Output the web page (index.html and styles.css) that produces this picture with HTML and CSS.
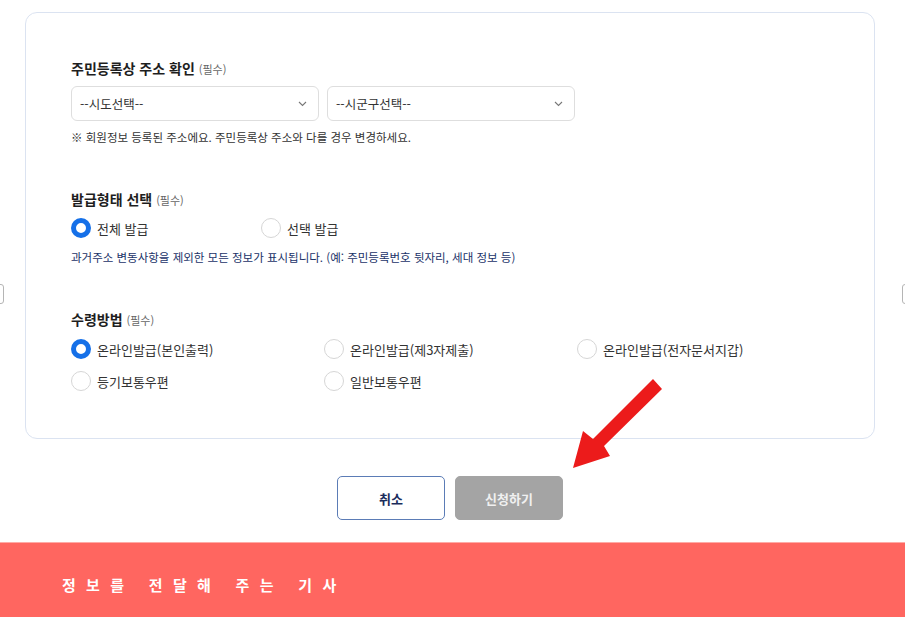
FILE: index.html
```html
<!DOCTYPE html>
<html lang="ko">
  <head>
    <meta charset="UTF-8" />
    <meta name="viewport" content="width=device-width, initial-scale=1.0" />
    <title>증명서 신청</title>
    <link rel="stylesheet" href="styles.css">
  </head>
  <body>
    <div class="page">
      <!-- 신청 폼 -->
      <div class="form-card">
        <section class="form-group">
          <h3 class="group-title">주민등록상 주소 확인 <span class="req">(필수)</span></h3>
          <div class="select-row">
            <div class="select-box">
              <span>--시도선택--</span>
              <svg class="chev" width="9" height="6" viewBox="0 0 9 6"><path d="M1 1l3.5 3.5L8 1" fill="none" stroke="#777" stroke-width="1.1"/></svg>
            </div>
            <div class="select-box">
              <span>--시군구선택--</span>
              <svg class="chev" width="9" height="6" viewBox="0 0 9 6"><path d="M1 1l3.5 3.5L8 1" fill="none" stroke="#777" stroke-width="1.1"/></svg>
            </div>
          </div>
          <p class="note">※ 회원정보 등록된 주소에요. 주민등록상 주소와 다를 경우 변경하세요.</p>
        </section>

        <section class="form-group">
          <h3 class="group-title">발급형태 선택 <span class="req">(필수)</span></h3>
          <div class="radio-row">
            <label class="radio"><span class="dot checked"></span>전체 발급</label>
            <label class="radio"><span class="dot"></span>선택 발급</label>
          </div>
          <p class="note blue">과거주소 변동사항을 제외한 모든 정보가 표시됩니다. (예: 주민등록번호 뒷자리, 세대 정보 등)</p>
        </section>

        <section class="form-group">
          <h3 class="group-title">수령방법 <span class="req">(필수)</span></h3>
          <div class="radio-grid">
            <label class="radio"><span class="dot checked"></span>온라인발급(본인출력)</label>
            <label class="radio"><span class="dot"></span>온라인발급(제3자제출)</label>
            <label class="radio"><span class="dot"></span>온라인발급(전자문서지갑)</label>
            <label class="radio"><span class="dot"></span>등기보통우편</label>
            <label class="radio"><span class="dot"></span>일반보통우편</label>
          </div>
        </section>
      </div>

      <div class="btn-row">
        <button class="btn btn-cancel">취소</button>
        <button class="btn btn-submit">신청하기</button>
      </div>

      <!-- 강조 화살표 -->
      <svg class="arrow" width="100" height="100" viewBox="0 0 100 100">
        <polygon points="87,3 96,13 38,70 44,80 7,92 17,55 27,63" fill="#ec1b1b"/>
      </svg>

      <span class="edge edge-left"></span>
      <span class="edge edge-right"></span>
    </div>

    <div class="banner">
      <span class="banner-text">정보를 전달해 주는 기사</span>
    </div>
  </body>
</html>
```

FILE: styles.css
```css
body {
  margin: 0;
  padding: 0;
  overflow: hidden;
  font-family: "Noto Sans CJK KR", "Noto Sans", sans-serif;
  color: #222;
  background: #fff;
}

.page {
  position: relative;
  padding-top: 12px;
}

.form-card {
  margin-left: 25px;
  width: 850px;
  box-sizing: border-box;
  border: 1px solid #dbe3f1;
  border-radius: 12px;
  padding: 44px 45px 47px;
}

.form-group + .form-group {
  margin-top: 42px;
}

.group-title {
  margin: 0;
  font-size: 14px;
  line-height: 22px;
  font-weight: 700;
  color: #1e1e1e;
}

.req {
  font-size: 11px;
  font-weight: 400;
  color: #666;
}

.select-row {
  display: flex;
  gap: 8px;
  margin-top: 6px;
}

.select-box {
  width: 248px;
  height: 35px;
  box-sizing: border-box;
  border: 1px solid #dedede;
  border-radius: 6px;
  padding: 0 11px 0 8px;
  display: flex;
  align-items: center;
  justify-content: space-between;
  font-size: 12.5px;
  color: #333;
}

.note {
  margin: 7px 0 0;
  font-size: 11.5px;
  line-height: 18px;
  color: #333;
}

.note.blue {
  margin-top: 10px;
  color: #1a3268;
}

.radio-row {
  display: flex;
  margin-top: 7px;
}

.radio-row .radio {
  width: 190px;
}

.radio-grid {
  display: grid;
  grid-template-columns: 253px 253px 253px;
  row-gap: 12px;
  margin-top: 8px;
}

.radio {
  display: flex;
  align-items: center;
  gap: 6px;
  height: 20px;
  font-size: 13px;
  color: #333;
}

.dot {
  width: 20px;
  height: 20px;
  box-sizing: border-box;
  border: 1px solid #d6d6d6;
  border-radius: 50%;
  background: #fff;
  flex-shrink: 0;
}

.dot.checked {
  border: 5px solid #1570e8;
}

.btn-row {
  display: flex;
  justify-content: center;
  gap: 10px;
  margin-top: 37px;
  padding-right: 5px;
}

.btn {
  width: 108px;
  height: 44px;
  border-radius: 5px;
  font-family: inherit;
  font-size: 13px;
  font-weight: 700;
}

.btn-cancel {
  background: #fff;
  border: 1px solid #5b7cb6;
  color: #1b2d5c;
}

.btn-submit {
  background: #a4a4a4;
  border: 1px solid #a4a4a4;
  color: #f0f0f0;
}

.arrow {
  position: absolute;
  left: 566px;
  top: 376px;
}

.edge {
  position: absolute;
  top: 284px;
  width: 6px;
  height: 18px;
  border: 1px solid #b5b5b5;
  border-radius: 3px;
  background: #fff;
}

.edge-left {
  left: -4px;
}

.edge-right {
  right: -5px;
}

.banner {
  margin-top: 22px;
  height: 75px;
  background: #ff6660;
  border-top: 1px solid #ffaba6;
  padding-left: 62px;
  display: flex;
  align-items: center;
}

.banner-text {
  margin-top: 8px;
  color: #fff;
  font-size: 15px;
  font-weight: 700;
  letter-spacing: 10.3px;
}
```
